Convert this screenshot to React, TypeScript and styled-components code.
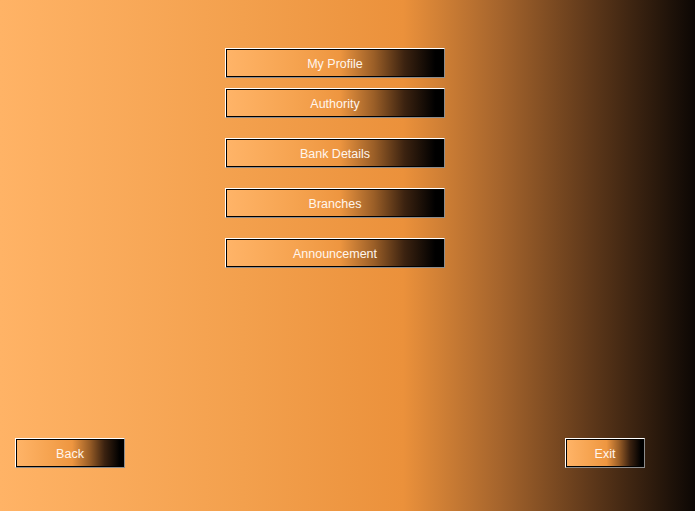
import React from "react";
import styled, { createGlobalStyle } from "styled-components";

const GlobalStyle = createGlobalStyle`
  html, body {
    margin: 0;
    padding: 0;
  }
  body {
    font-family: "Liberation Sans", "DejaVu Sans", sans-serif;
  }
`;

const Page = styled.div`
  width: 695px;
  height: 511px;
  box-sizing: border-box;
  display: flex;
  flex-direction: column;
  justify-content: space-between;
  padding: 48px 50px 43px 15px;
  background: linear-gradient(
    90deg,
    #ffb366 0%,
    #f3a04d 35%,
    #eb913b 58%,
    #a5642c 72%,
    #5e381a 85%,
    #0c0704 100%
  );
`;

const Menu = styled.div`
  display: flex;
  flex-direction: column;
  padding-left: 210px;
  gap: 20px;
`;

const Pair = styled.div`
  display: flex;
  flex-direction: column;
  gap: 10px;
`;

const Footer = styled.div`
  display: flex;
  justify-content: space-between;
  align-items: flex-end;
`;

const FormButton = styled.button<{ $width: number }>`
  width: ${(p) => p.$width}px;
  height: 30px;
  box-sizing: border-box;
  padding: 2px 0 0;
  border: 1px solid;
  border-color: #ffffff #8c8c8c #8c8c8c #ffffff;
  box-shadow: inset 1px 1px 0 #000, inset -1px -1px 0 #000;
  background: linear-gradient(
    90deg,
    #ffb468 0%,
    #f6a451 30%,
    #ee9640 52%,
    #9a5e27 68%,
    #3b2210 82%,
    #000000 96%
  );
  color: #fff6ee;
  font-family: "Liberation Sans", "DejaVu Sans", sans-serif;
  font-size: 12.5px;
  line-height: 26px;
  text-align: center;
  cursor: pointer;
`;

const App: React.FC = () => {
  return (
    <>
      <GlobalStyle />
      <Page>
        <Menu>
          <Pair>
            <FormButton $width={220}>My Profile</FormButton>
            <FormButton $width={220}>Authority</FormButton>
          </Pair>
          <FormButton $width={220}>Bank Details</FormButton>
          <FormButton $width={220}>Branches</FormButton>
          <FormButton $width={220}>Announcement</FormButton>
        </Menu>
        <Footer>
          <FormButton $width={110}>Back</FormButton>
          <FormButton $width={80}>Exit</FormButton>
        </Footer>
      </Page>
    </>
  );
};

export default App;
